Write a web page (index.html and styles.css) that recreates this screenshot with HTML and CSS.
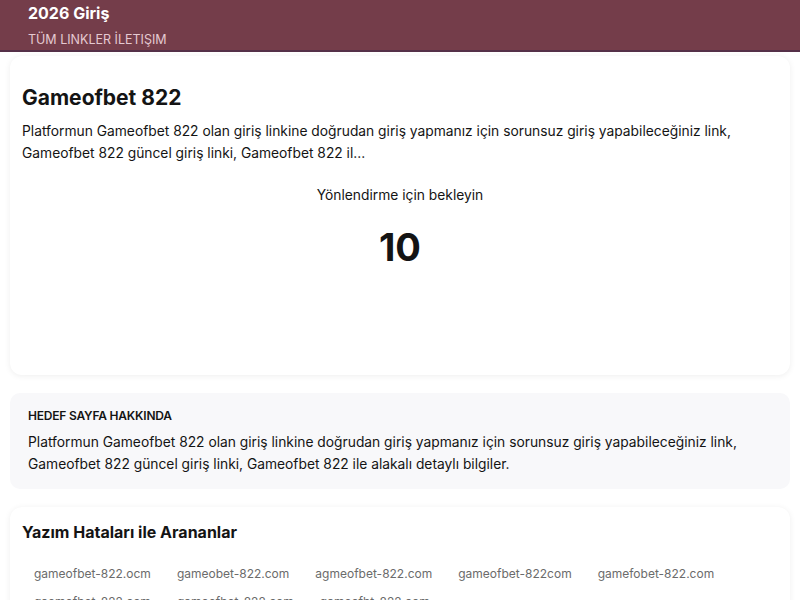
FILE: index.html
```html
<!DOCTYPE html>
<html lang="tr">
<head>
<meta charset="utf-8">
<title>Gameofbet 822</title>
<link rel="stylesheet" href="styles.css">
</head>
<body>
<header class="topbar">
  <div class="brand">2026 Giriş</div>
  <nav class="nav"><a href="#">TÜM LINKLER</a> <a href="#">İLETIŞIM</a></nav>
</header>
<main class="page">
  <section class="card main-card">
    <h1 class="title">Gameofbet 822</h1>
    <p class="desc">Platformun Gameofbet 822 olan giriş linkine doğrudan giriş yapmanız için sorunsuz giriş yapabileceğiniz link, Gameofbet 822 güncel giriş linki, Gameofbet 822 il...</p>
    <div class="wait">Yönlendirme için bekleyin</div>
    <div class="count">10</div>
  </section>
  <section class="about">
    <h2 class="about-title">HEDEF SAYFA HAKKINDA</h2>
    <p class="about-text">Platformun Gameofbet 822 olan giriş linkine doğrudan giriş yapmanız için sorunsuz giriş yapabileceğiniz link, Gameofbet 822 güncel giriş linki, Gameofbet 822 ile alakalı detaylı bilgiler.</p>
  </section>
  <section class="card typos">
    <h2 class="typos-title">Yazım Hataları ile Arananlar</h2>
    <div class="tags">
      <span class="tag">gameofbet-822.ocm</span>
      <span class="tag">gameobet-822.com</span>
      <span class="tag">agmeofbet-822.com</span>
      <span class="tag">gameofbet-822com</span>
      <span class="tag">gamefobet-822.com</span>
      <span class="tag">gaemofbet-822.com</span>
      <span class="tag">gamoefbet-822.com</span>
      <span class="tag">gameofbt-822.com</span>
    </div>
  </section>
</main>
</body>
</html>
```
FILE: styles.css
```css
* { box-sizing: border-box; }
html, body { margin: 0; padding: 0; }
body {
  font-family: Inter, "Noto Sans", "DejaVu Sans", sans-serif;
  color: #141414;
  background: #fff;
}
.topbar {
  background: #743d4a;
  border-bottom: 2px solid #553048;
  height: 52px;
  padding: 4px 28px 0;
}
.brand {
  color: #fff;
  font-weight: 700;
  font-size: 16px;
  line-height: 18px;
}
.nav {
  margin-top: 11px;
  font-size: 12.5px;
  line-height: 14px;
  color: #e5c9d1;
}
.nav a { color: inherit; text-decoration: none; }
.page {
  padding: 4px 10px 0;
  display: flex;
  flex-direction: column;
  gap: 18px;
}
.card {
  background: #fff;
  border-radius: 12px;
  box-shadow: 0 1px 6px rgba(0,0,0,0.07);
  padding: 12px 12px;
}
.main-card {
  height: 319px;
  padding-top: 29px;
}
.title {
  margin: 0;
  font-size: 21px;
  font-weight: 700;
  line-height: 26px;
}
.desc {
  margin: 9px 0 0;
  font-size: 13.8px;
  line-height: 22px;
}
.wait {
  margin-top: 20px;
  text-align: center;
  font-size: 13.8px;
  line-height: 22px;
}
.count {
  margin-top: 18px;
  text-align: center;
  font-size: 38px;
  font-weight: 700;
  line-height: 46px;
}
.about {
  background: #f8f8fa;
  border-radius: 10px;
  padding: 16px 18px 14px;
}
.about-title {
  margin: 0;
  font-size: 12px;
  font-weight: 600;
  line-height: 14px;
  letter-spacing: -0.2px;
}
.about-text {
  margin: 8px 0 0;
  font-size: 13.8px;
  line-height: 22px;
}
.typos {
  padding-top: 15px;
  border-radius: 12px 12px 0 0;
}
.typos-title {
  margin: 0;
  font-size: 16px;
  font-weight: 700;
  line-height: 20px;
}
.tags {
  margin-top: 24px;
  display: flex;
  flex-wrap: wrap;
  column-gap: 2px;
  row-gap: 12px;
}
.tag {
  padding: 0 12px;
  font-size: 12px;
  line-height: 16px;
  color: #6b6b6b;
}
```
